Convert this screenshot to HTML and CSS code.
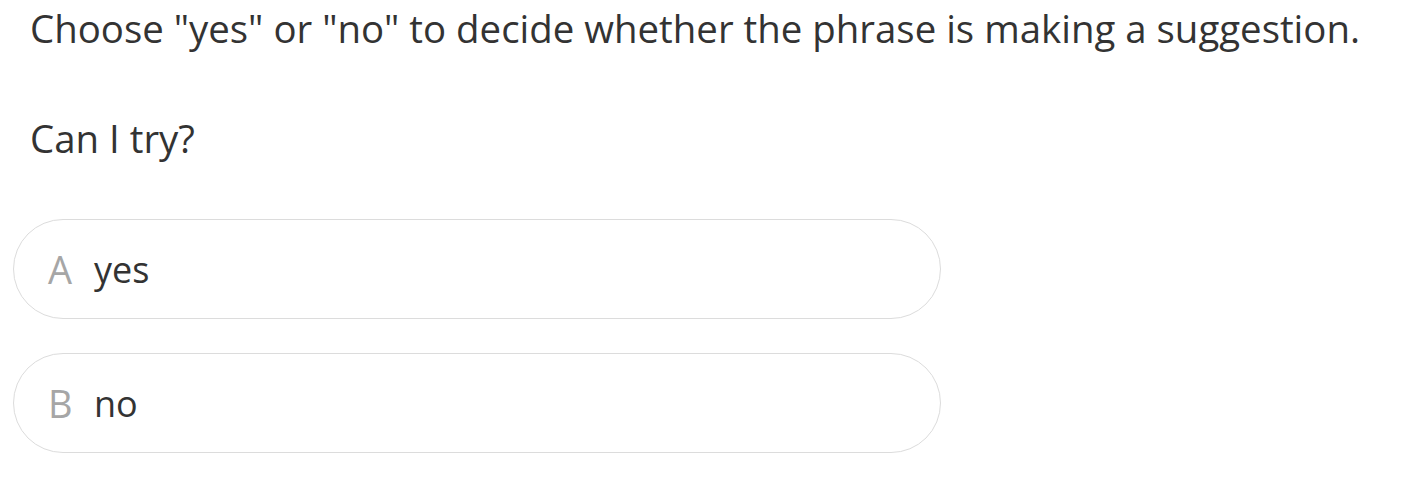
FILE: index.html
```html
<!DOCTYPE html>
<html>
<head>
<meta charset="utf-8">
<link rel="stylesheet" href="styles.css">
</head>
<body>
<div class="page">
  <p class="prompt">Choose "yes" or "no" to decide whether the phrase is making a suggestion.</p>
  <p class="question">Can I try?</p>
  <div class="options">
    <div class="option"><span class="letter">A</span><span class="label">yes</span></div>
    <div class="option"><span class="letter">B</span><span class="label">no</span></div>
  </div>
</div>
</body>
</html>
```
FILE: styles.css
```css
html, body {
  margin: 0;
  padding: 0;
  background: #fff;
}
.page {
  font-family: "Open Sans", "Noto Sans", sans-serif;
  color: #333;
  padding: 0 0 0 13px;
}
.prompt {
  margin: 0;
  padding: 2px 0 0 17px;
  font-size: 38.4px;
  line-height: 52px;
}
.question {
  margin: 0;
  padding: 58px 0 0 17px;
  font-size: 38.4px;
  line-height: 52px;
}
.options {
  display: flex;
  flex-direction: column;
  gap: 34px;
  margin-top: 55px;
  width: 928px;
}
.option {
  box-sizing: border-box;
  display: flex;
  align-items: center;
  height: 100px;
  border: 1.5px solid #dcdcdc;
  border-radius: 50px;
  padding-left: 34px;
  font-size: 36px;
}
.letter {
  color: #a6a6a6;
  width: 46px;
  font-size: 38px;
}
.label {
  color: #333;
}
```
